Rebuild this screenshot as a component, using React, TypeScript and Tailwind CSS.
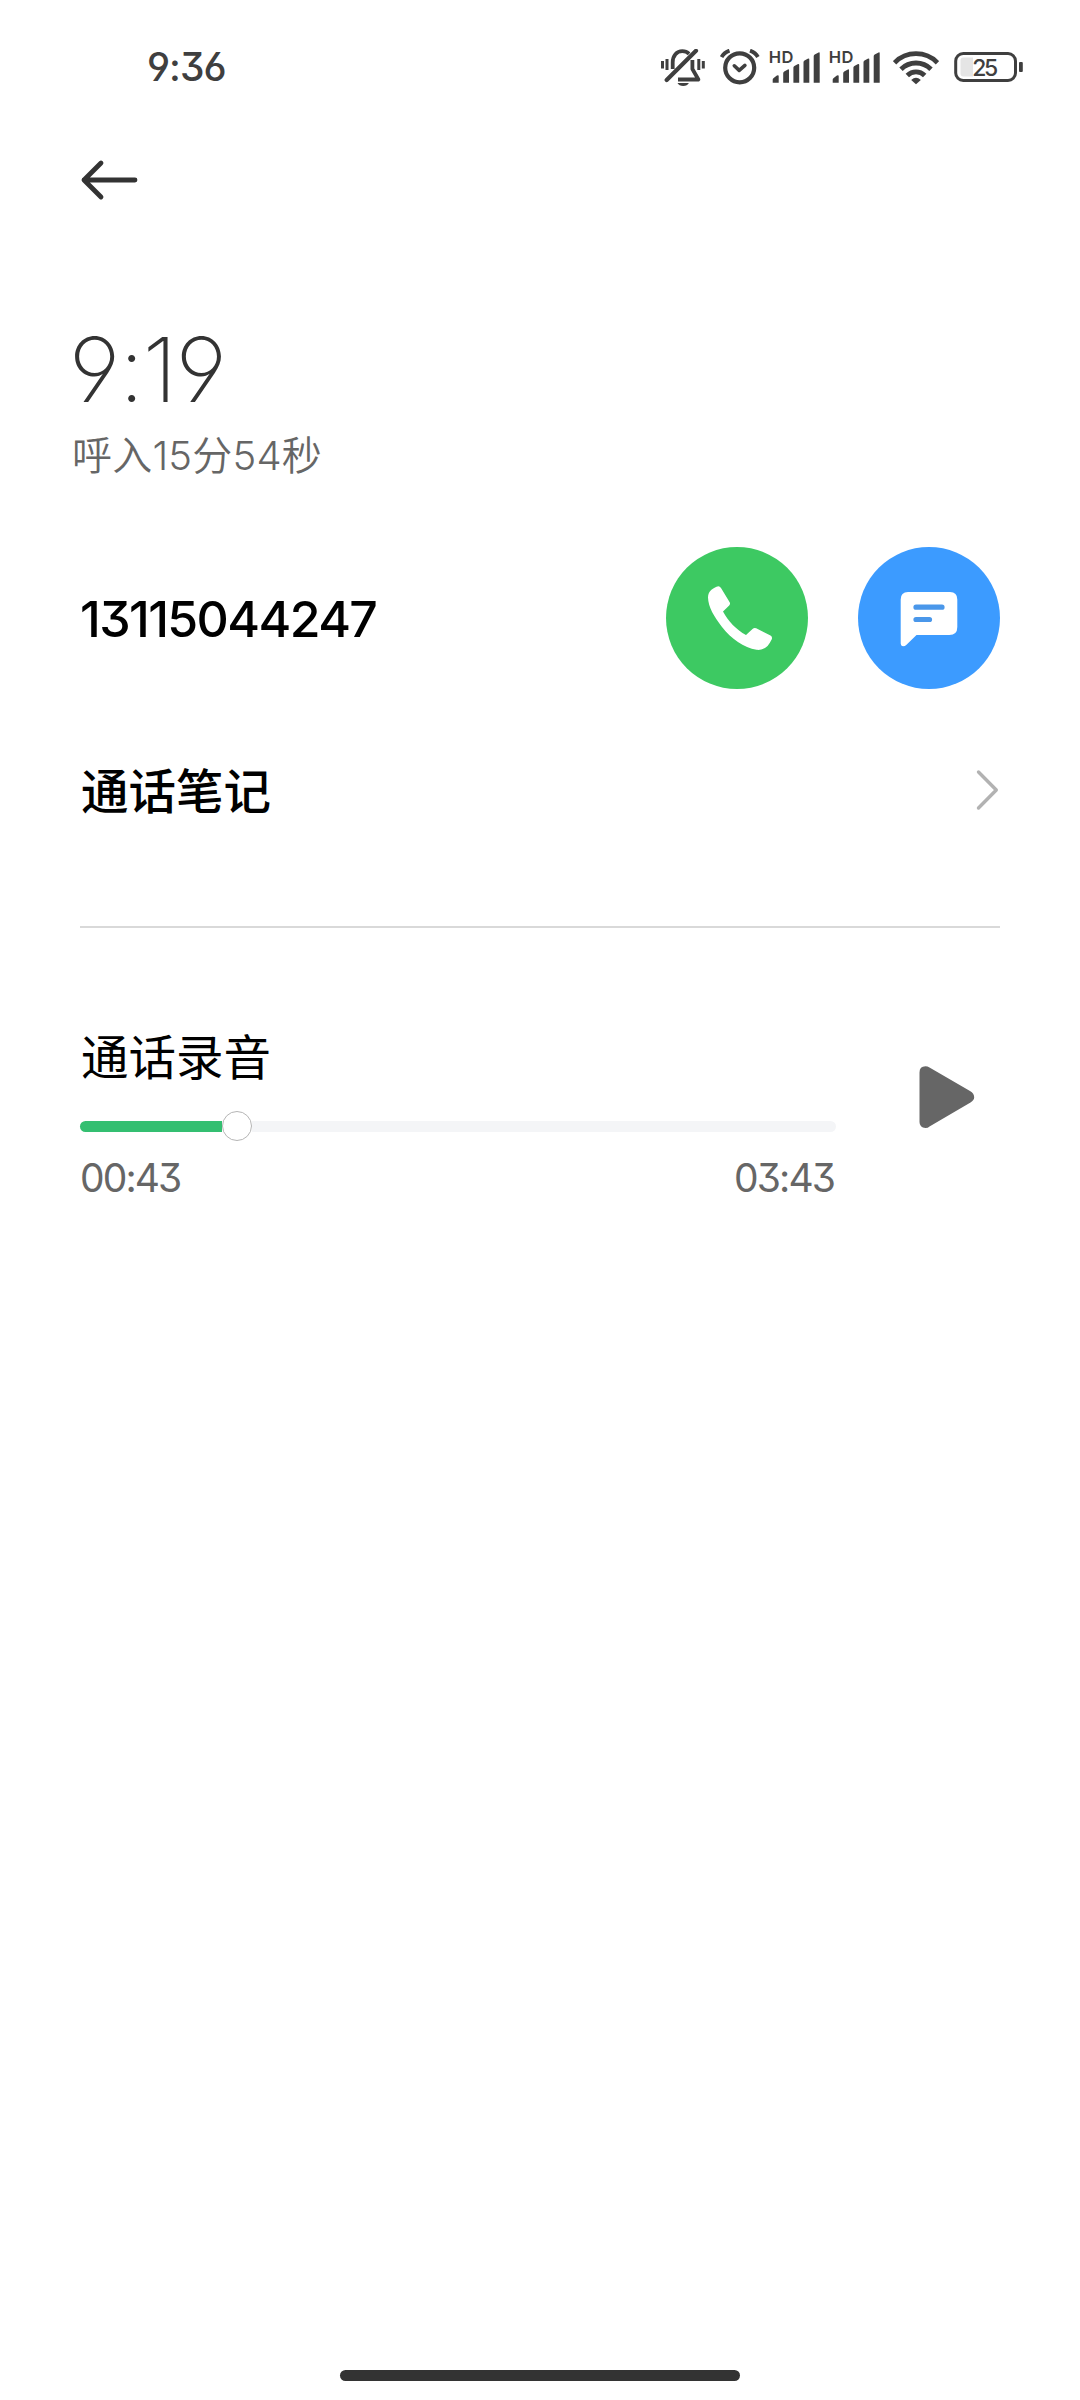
const call = {
  time: "9:19",
  duration: "呼入15分54秒",
  number: "13115044247",
};

const recording = {
  current: "00:43",
  total: "03:43",
};

function MutedBell() {
  return (
    <svg width="46" height="38" viewBox="0 0 46 38" fill="none" stroke="#3f3f3f">
      <path d="M2.5 12v7.5M7 10v11M38.8 10v11M43.3 12v7.5" strokeWidth="3" />
      <path d="M12.7 20v-6.5C12.7 6.5 16.8 2.2 22.3 2.2c2.8 0 5 .9 6.8 2.6" strokeWidth="3.8" />
      <path d="M6.7 31 36 1.8" strokeWidth="4.2" strokeLinecap="round" />
      <path d="M32.4 11v9l6 10.5H18" strokeWidth="3.8" strokeLinejoin="round" />
      <path d="M17.5 34h11.4c-1 1.9-3 3-5.7 3s-4.7-1.1-5.7-3z" fill="#3f3f3f" stroke="none" />
    </svg>
  );
}

function AlarmClock() {
  return (
    <svg width="40" height="36" viewBox="0 0 40 36" fill="none" stroke="#3f3f3f">
      <circle cx="19.7" cy="18.8" r="14.5" strokeWidth="4.2" />
      <path d="M14.3 16.8l4.9 4.6 5.7-5" strokeWidth="3.6" strokeLinecap="round" strokeLinejoin="round" />
      <path d="M1.6 8Q4 3.5 9.5 1.6M30 1.6Q35.5 3.5 37.9 8" strokeWidth="3.8" />
    </svg>
  );
}

function HdSignal() {
  return (
    <svg className="-mt-[6px] overflow-visible" width="50" height="42" viewBox="0 -6 50 42" fill="#3f3f3f">
      <text x="-1.2" y="13.9" fontFamily="Inter, sans-serif" fontSize="16.5" fontWeight="600" textLength="24.5">HD</text>
      <path d="M2.7 33.7v-3.2q0-1 1-1.6l3.2-2.3q1.8-1 1.8.6v6.5z" />
      <path d="M13.2 33.7v-9.5q0-1 1-1.6l3.2-1.9q1.6-1 1.6.6v12.4z" />
      <path d="M23.4 33.7V18.6q0-1 1-1.6l3.2-1.7q1.6-1 1.6.6v17.8z" />
      <path d="M33.5 33.7V13.2q0-1 1-1.6l3.2-1.8q1.6-1 1.6.6v23.3z" />
      <path d="M43.7 33.7V7.2q0-1 1-1.6l3.4-1.9q1.6-1 1.6.6v29.4z" />
    </svg>
  );
}

function Wifi() {
  return (
    <svg width="46" height="36" viewBox="0 0 46 36" fill="none" stroke="#3f3f3f" strokeWidth="4.8">
      <path d="M1.5 13.8a30 30 0 0 1 43 0" />
      <path d="M8 20.2a21.2 21.2 0 0 1 30 0" />
      <path d="M14.3 26.5a12.3 12.3 0 0 1 17.4 0" />
      <path d="M18.2 31Q23 26.3 27.8 31L23 35.2z" fill="#3f3f3f" stroke="none" />
    </svg>
  );
}

function Battery() {
  return (
    <svg width="70" height="36" viewBox="0 0 70 36">
      <rect x="1.7" y="4.6" width="59.8" height="26.8" rx="7.5" fill="none" stroke="#3f3f3f" strokeWidth="3" />
      <path d="M9.5 8.5H19v19H9.5Q6.5 27.5 6.5 24.5v-13Q6.5 8.5 9.5 8.5z" fill="#e5e5e5" />
      <rect x="65" y="13" width="3.8" height="10" rx="1" fill="#3f3f3f" />
      <text x="18.3" y="26.6" fontFamily="Inter, sans-serif" fontSize="23" fontWeight="500" fill="#3f3f3f" textLength="26">25</text>
    </svg>
  );
}

function StatusBar() {
  return (
    <div className="flex h-[134px] items-start justify-between pt-[49px] pr-[56px] pl-[147px] text-[#3f3f3f]">
      <span className="text-[39px] leading-9 font-medium tracking-[-1px]">9:36</span>
      <div className="flex items-start">
        <MutedBell />
        <div className="ml-[14px]"><AlarmClock /></div>
        <div className="ml-[10px]"><HdSignal /></div>
        <div className="ml-[10px]"><HdSignal /></div>
        <div className="ml-[13px]"><Wifi /></div>
        <div className="ml-[15px]"><Battery /></div>
      </div>
    </div>
  );
}

export default function App() {
  return (
    <div className="flex h-[2400px] w-[1080px] flex-col bg-white font-[Inter,'Noto_Sans_CJK_SC',sans-serif] whitespace-nowrap [font-feature-settings:'cv03','cv04','cv09']">
      <StatusBar />

      {/* back */}
      <div className="flex h-[92px] items-center pl-[79px]">
        <svg width="60" height="44" viewBox="0 0 60 44" fill="none" stroke="#333" strokeWidth="4.8" strokeLinecap="round" strokeLinejoin="round">
          <path d="M22 5 5 22 22 39M5 22H56" />
        </svg>
      </div>

      {/* time + duration */}
      <div className="flex h-[304px] flex-col pt-[99px] pl-[72px]">
        <p className="-ml-[3px] text-[90px] leading-[90px] font-[240] tracking-[-1.2px] text-[#333]">{call.time}</p>
        <p className="mt-[13px] text-[40px] leading-[56px] font-[350] tracking-[0.2px] text-[#666]">{call.duration}</p>
      </div>

      {/* number */}
      <div className="mx-20 mt-[17px] flex h-[142px] items-center justify-between">
        <span className="pt-[2px] text-[50px] leading-none font-medium tracking-[-1.6px] text-black">{call.number}</span>
        <div className="flex gap-[50px]">
          <button className="flex size-[142px] items-center justify-center rounded-full bg-[#3dc962]">
            <svg width="142" height="142" viewBox="0 0 142 142" fill="#fff">
              <path d="M50.5 39.8Q53.3 38.3 55 41L63.5 55q1.2 1.9-.3 3.4L57 64.5C62 74 70.5 83 80 88l6.8-6.3q1.5-1.4 3.4-.4L104.500 88.500q2.400 1.500 1 4.300C102.500 99.500 98 103.500 90.500 102.800C78 101 65 91.500 56 80C48 69.500 42.300 60 42 50.500C42.200 45 45 42.200 50.500 39.800z" />
            </svg>
          </button>
          <button className="flex size-[142px] items-center justify-center rounded-full bg-[#3c9bff]">
            <svg width="142" height="142" viewBox="0 0 142 142">
              <path d="M50 45H92Q99.3 45 99.3 52.5V80Q99.3 88 91.3 88H58.5L48.5 97.8Q47 99.3 45 99.3Q42.7 99 42.7 96.5V52.5Q42.7 45 50 45z" fill="#fff" />
              <path d="M58 60.2H84M58 72.5H71.5" fill="none" stroke="#4a97ea" strokeWidth="5.2" strokeLinecap="round" />
            </svg>
          </button>
        </div>
      </div>

      {/* notes */}
      <div className="mx-20 flex h-[239px] items-start justify-between border-b-2 border-[#d9d9d9] pt-[68px]">
        <span className="pl-px text-[47.5px] leading-[70px] font-medium text-black">通话笔记</span>
        <svg className="mt-[11px]" width="26" height="44" viewBox="0 0 26 44" fill="none" stroke="#b2b2b2" strokeWidth="3.4" strokeLinecap="round" strokeLinejoin="round">
          <path d="M4.5 4 22.3 22 4.5 40" />
        </svg>
      </div>

      {/* recording */}
      <div className="mx-20 flex pt-[95px]">
        <div className="w-[756px]">
          <p className="pl-px text-[47.5px] leading-[70px] text-black">通话录音</p>
          <div className="mt-[18px] flex h-[30px] items-center">
            <div className="h-[11px] w-[142px] rounded-l-full bg-[#34bf71]" />
            <div className="size-[30px] rounded-full border border-[#b5b5b5] bg-white" />
            <div className="h-[11px] flex-1 rounded-r-full bg-[#f4f5f7]" />
          </div>
          <div className="mt-[17px] flex justify-between pr-[2px] text-[39px] leading-[40px] font-[370] tracking-[-1.9px] text-[#666]">
            <span>{recording.current}</span>
            <span>{recording.total}</span>
          </div>
        </div>
        <svg className="mt-[41px] ml-[81px]" width="60" height="66" viewBox="0 0 60 66" fill="#666">
          <path d="M2.5 8.5Q2.5 2.2 8.5 2.2Q10.5 2.2 12.5 3.4L53 27Q57.2 29.5 57.2 33.2Q57.2 36 53.5 38.5L12.5 62.5Q11 64 8.5 64Q2.5 63.5 2.5 58z" />
        </svg>
      </div>

      {/* home indicator */}
      <div className="mx-auto mt-auto mb-[19px] h-[11px] w-[400px] rounded-full bg-[#333]" />
    </div>
  );
}
